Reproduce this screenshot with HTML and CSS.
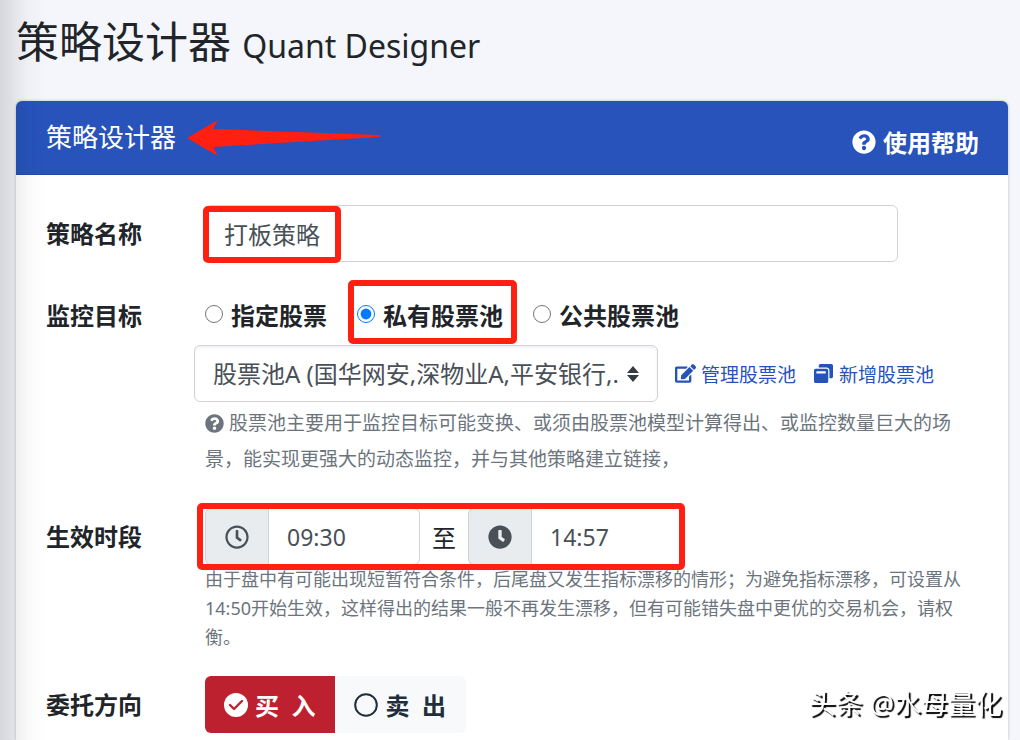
FILE: index.html
```html
<!DOCTYPE html>
<html lang="zh-CN">
<head>
<meta charset="UTF-8">
<meta name="viewport" content="width=device-width, initial-scale=1.0">
<title>策略设计器</title>
<link rel="stylesheet" href="styles.css">
</head>
<body>

<div class="page">
    <h1>策略设计器 <small>Quant Designer</small></h1>

    <div class="card">
        <div class="card-header">
            <h2>策略设计器</h2>
            <svg class="arrow" viewBox="0 0 194 36"><path fill="#ff2012" d="M0 18L31 0l-5 9 166 6q3 1 0 2L26 27l5 9z"/></svg>
            <a class="help-link" href="#">
                <svg class="icon" viewBox="0 0 512 512"><path d="M504 256c0 136.997-111.043 248-248 248S8 392.997 8 256C8 119.083 119.043 8 256 8s248 111.083 248 248zM262.655 90c-54.497 0-89.255 22.957-116.549 63.758-3.536 5.286-2.353 12.415 2.715 16.258l34.699 26.31c5.205 3.947 12.621 3.008 16.665-2.122 17.864-22.658 30.113-35.797 57.303-35.797 20.429 0 45.698 13.148 45.698 32.958 0 14.976-12.363 22.667-32.534 33.976C247.128 238.528 216 254.941 216 296v4c0 6.627 5.373 12 12 12h56c6.627 0 12-5.373 12-12v-1.333c0-28.462 83.186-29.647 83.186-106.667 0-58.002-60.165-102-116.531-102zM256 338c-25.365 0-46 20.635-46 46 0 25.364 20.635 46 46 46s46-20.636 46-46c0-25.365-20.635-46-46-46z"/></svg>
                使用帮助
            </a>
        </div>

        <form class="card-body">
            <div class="form-row">
                <label class="row-label" for="name">策略名称</label>
                <div class="field name-field">
                    <input type="text" class="control" id="name" name="name" value="打板策略">
                    <span class="mark mark-name"></span>
                </div>
            </div>

            <div class="form-row">
                <span class="row-label" id="targetLabel">监控目标</span>
                <div class="field">
                    <div class="radios" role="radiogroup" aria-labelledby="targetLabel">
                        <label><input type="radio" name="target" value="stock">指定股票</label>
                        <label><input type="radio" name="target" value="private" checked>私有股票池<span class="mark mark-radio"></span></label>
                        <label><input type="radio" name="target" value="public">公共股票池</label>
                    </div>
                    <div class="pool">
                        <div class="select-wrap">
                            <select class="control" name="pool" aria-label="股票池">
                                <option>股票池A (国华网安,深物业A,平安银行,.</option>
                            </select>
                            <svg class="caret" viewBox="0 0 12 16"><path d="M6 0l6 7H0zM0 9h12l-6 7z"/></svg>
                        </div>
                        <a href="#">
                            <svg class="icon" viewBox="0 0 576 512"><path d="M402.6 83.2l90.2 90.2c3.8 3.8 3.8 10 0 13.8L274.4 405.6l-92.8 10.3c-12.4 1.4-22.9-9.1-21.5-21.5l10.3-92.8L388.8 83.2c3.8-3.8 10-3.8 13.8 0zm162-22.9l-48.8-48.8c-15.2-15.2-39.9-15.2-55.2 0l-35.4 35.4c-3.8 3.8-3.8 10 0 13.8l90.2 90.2c3.8 3.8 10 3.8 13.8 0l35.4-35.4c15.2-15.3 15.2-40 0-55.2zM384 346.2V448H64V128h229.8c3.2 0 6.2-1.3 8.5-3.5l40-40c7.6-7.6 2.2-20.5-8.5-20.5H48C21.5 64 0 85.5 0 112v352c0 26.5 21.5 48 48 48h352c26.5 0 48-21.5 48-48V306.2c0-10.7-12.9-16-20.5-8.5l-40 40c-2.2 2.3-3.5 5.3-3.5 8.5z"/></svg>
                            管理股票池
                        </a>
                        <a href="#">
                            <svg class="icon" viewBox="0 0 512 512"><path d="M512 48v288c0 26.5-21.5 48-48 48h-48V176c0-44.1-35.9-80-80-80H128V48c0-26.5 21.5-48 48-48h288c26.5 0 48 21.5 48 48zM384 176v288c0 26.5-21.5 48-48 48H48c-26.5 0-48-21.5-48-48V176c0-26.5 21.5-48 48-48h288c26.5 0 48 21.5 48 48zm-68 28c0-6.6-5.4-12-12-12H76c-6.6 0-12 5.4-12 12v52h252v-52z"/></svg>
                            新增股票池
                        </a>
                    </div>
                    <p class="hint hint-pool"><svg class="icon" viewBox="0 0 512 512"><path d="M504 256c0 136.997-111.043 248-248 248S8 392.997 8 256C8 119.083 119.043 8 256 8s248 111.083 248 248zM262.655 90c-54.497 0-89.255 22.957-116.549 63.758-3.536 5.286-2.353 12.415 2.715 16.258l34.699 26.31c5.205 3.947 12.621 3.008 16.665-2.122 17.864-22.658 30.113-35.797 57.303-35.797 20.429 0 45.698 13.148 45.698 32.958 0 14.976-12.363 22.667-32.534 33.976C247.128 238.528 216 254.941 216 296v4c0 6.627 5.373 12 12 12h56c6.627 0 12-5.373 12-12v-1.333c0-28.462 83.186-29.647 83.186-106.667 0-58.002-60.165-102-116.531-102zM256 338c-25.365 0-46 20.635-46 46 0 25.364 20.635 46 46 46s46-20.636 46-46c0-25.365-20.635-46-46-46z"/></svg>股票池主要用于监控目标可能变换、或须由股票池模型计算得出、或监控数量巨大的场景，能实现更强大的动态监控，并与其他策略建立链接，</p>
                </div>
            </div>

            <div class="form-row">
                <span class="row-label">生效时段</span>
                <div class="field">
                    <div class="times">
                        <div class="input-group">
                            <label class="addon" for="start" aria-label="开始时间">
                                <svg class="icon" viewBox="0 0 512 512"><path d="M256 8C119 8 8 119 8 256s111 248 248 248 248-111 248-248S393 8 256 8zm0 448c-110.5 0-200-89.5-200-200S145.5 56 256 56s200 89.5 200 200-89.5 200-200 200zm61.8-104.4l-84.9-61.7c-3.1-2.3-4.9-5.9-4.9-9.7V116c0-6.6 5.4-12 12-12h32c6.6 0 12 5.4 12 12v141.7l66.8 48.6c5.4 3.9 6.5 11.4 2.6 16.8L334.6 349c-3.9 5.3-11.4 6.5-16.8 2.6z"/></svg>
                            </label>
                            <input type="text" class="control" id="start" name="start" value="09:30">
                        </div>
                        <span>至</span>
                        <div class="input-group">
                            <label class="addon" for="end" aria-label="结束时间">
                                <svg class="icon" viewBox="0 0 512 512"><path d="M256 8C119 8 8 119 8 256s111 248 248 248 248-111 248-248S393 8 256 8zm57.1 350.1L224.9 294c-3.1-2.3-4.9-5.9-4.9-9.7V116c0-6.6 5.4-12 12-12h48c6.6 0 12 5.4 12 12v137.7l63.5 46.2c5.4 3.9 6.5 11.4 2.6 16.8l-28.2 38.8c-3.9 5.3-11.4 6.5-16.8 2.6z"/></svg>
                            </label>
                            <input type="text" class="control" id="end" name="end" value="14:57">
                        </div>
                        <span class="mark mark-times"></span>
                    </div>
                    <p class="hint hint-time">由于盘中有可能出现短暂符合条件，后尾盘又发生指标漂移的情形；为避免指标漂移，可设置从14:50开始生效，这样得出的结果一般不再发生漂移，但有可能错失盘中更优的交易机会，请权衡。</p>
                </div>
            </div>

            <div class="form-row">
                <span class="row-label">委托方向</span>
                <div class="field btn-group">
                    <button type="button" class="btn buy">
                        <svg class="icon" viewBox="0 0 24 24"><circle cx="12" cy="12" r="12"/><path d="M6 12l4 4 8-8" fill="none" stroke="#bd2130" stroke-width="2.4" stroke-linecap="round" stroke-linejoin="round"/></svg><span>买  入</span>
                    </button>
                    <button type="button" class="btn sell">
                        <svg class="icon" viewBox="0 0 24 24"><circle cx="12" cy="12" r="10.8" fill="none" stroke="currentColor" stroke-width="2"/></svg><span>卖  出</span>
                    </button>
                </div>
            </div>
        </form>
    </div>
</div>

<div class="watermark">头条 @水母量化</div>

</body>
</html>
```

FILE: styles.css
```css
* {
    box-sizing: border-box;
}

body {
    margin: 0;
    font-family: "Noto Sans", "Noto Sans CJK SC", sans-serif;
    font-size: 24px;
    color: #212529;
    background-color: #f4f6fb;
}

/* shadow of the side menu */
body::before {
    content: "";
    position: fixed;
    z-index: 5;
    top: 0;
    bottom: 0;
    left: 0;
    width: 48px;
    background: linear-gradient(to right, rgba(0, 0, 0, 0.13), rgba(0, 0, 0, 0.06) 35%, rgba(0, 0, 0, 0.02) 60%, transparent);
    pointer-events: none;
}

.page {
    display: flex;
    flex-direction: column;
    min-height: 100vh;
    padding: 12px 12px 0 16px;
}

h1 {
    height: 64px;
    margin: 0 0 25px;
    font-size: 43px;
    font-weight: 400;
    line-height: 60px;
}

h1 small {
    font-size: 32px;
}

a {
    color: #2653b9;
    text-decoration: none;
}

.icon {
    flex: none;
    width: 24px;
    height: 24px;
    fill: currentColor;
}

.card {
    flex: 1;
    background-color: white;
    border-radius: 6px 6px 0 0;
    box-shadow: 0 0 3px rgba(0, 0, 0, 0.25);
}

.card-header {
    display: flex;
    align-items: center;
    height: 74px;
    padding: 0 29px 0 30px;
    color: white;
    background-color: #2753bb;
    border-bottom: 1px solid #234ba8;
    border-radius: 6px 6px 0 0;
}

h2 {
    margin: 0;
    padding-bottom: 4px;
    font-size: 26px;
    font-weight: 400;
}

.arrow {
    width: 194px;
    height: 36px;
    margin-left: 11px;
}

.help-link {
    display: flex;
    align-items: center;
    gap: 7px;
    margin-left: auto;
    padding-top: 8px;
    font-weight: 700;
    color: white;
}

.card-body {
    display: grid;
    gap: 24px;
    padding: 30px 30px 0;
}

.form-row {
    display: grid;
    grid-template-columns: 159px minmax(0, 1fr);
}

.row-label {
    font-weight: 700;
    line-height: 58px;
}

.control {
    width: 100%;
    height: 57px;
    padding: 0 18px;
    font: inherit;
    color: #495057;
    background-color: white;
    border: 1px solid #ced4da;
    border-radius: 6px;
}

.name-field {
    position: relative;
    margin-right: 80px;
}

.radios {
    display: flex;
    gap: 30px;
    height: 54px;
    margin-bottom: 4px;
}

.radios label {
    position: relative;
    display: flex;
    align-items: center;
    font-weight: 700;
}

.radios input {
    width: 18px;
    height: 18px;
    margin: 0 8px 0 0;
    accent-color: #007bff;
}

.pool {
    display: flex;
    align-items: center;
    gap: 17px;
    margin-left: -11px;
}

.pool a {
    display: flex;
    align-items: center;
    gap: 5px;
    font-size: 19px;
}

.pool a .icon {
    width: 21px;
    height: 19px;
}

.select-wrap {
    position: relative;
    width: 464px;
}

.select-wrap select {
    display: block;
    padding-right: 36px;
    appearance: none;
    box-shadow: inset 0 2px 3px rgba(0, 0, 0, 0.06);
}

.caret {
    position: absolute;
    top: 21px;
    right: 19px;
    width: 12px;
    height: 16px;
    fill: #343a40;
    pointer-events: none;
}

.hint {
    max-width: 760px;
    margin: 0;
    color: #6c757d;
}

.hint-pool {
    padding: 3px 0 7px;
    font-size: 19px;
    line-height: 36px;
}

.hint-pool .icon {
    width: 19px;
    height: 19px;
    margin-right: 5px;
    vertical-align: -3px;
}

.hint-time {
    font-size: 18px;
    line-height: 29px;
}

.times {
    position: relative;
    display: flex;
    align-items: center;
    gap: 12px;
    width: 478px;
}

.input-group {
    display: flex;
    flex: 1;
    min-width: 0;
}

.addon {
    display: flex;
    flex: none;
    align-items: center;
    justify-content: center;
    width: 63px;
    color: #495057;
    background-color: #e9ecef;
    border: 1px solid #ced4da;
    border-right: 0;
    border-radius: 6px 0 0 6px;
}

.input-group .control {
    min-width: 0;
    font-size: 23px;
    border-radius: 0 6px 6px 0;
}

.btn-group {
    display: flex;
}

.btn {
    display: flex;
    align-items: center;
    gap: 7px;
    height: 57px;
    padding: 0 20px 0 19px;
    font: inherit;
    font-weight: 700;
    white-space: pre;
    border: 0;
}

.buy {
    color: white;
    background-color: #bd2130;
    border-radius: 6px 0 0 6px;
}

.sell {
    color: #1f2d3d;
    background-color: #f8f9fa;
    border-radius: 0 6px 6px 0;
}

/* red frames drawn over the form */
.mark {
    position: absolute;
    border: 6px solid #ff2012;
    border-radius: 5px;
    pointer-events: none;
}

.mark-name {
    top: 1px;
    left: -2px;
    width: 138px;
    height: 57px;
}

.mark-radio {
    inset: -7px -14px -3px -9px;
}

.mark-times {
    inset: -5px -2px -5px -8px;
}

.watermark {
    position: fixed;
    right: 18px;
    bottom: 18px;
    font-size: 27px;
    line-height: 36px;
    color: white;
    text-shadow: 2px 2px 1px #000;
}
```
